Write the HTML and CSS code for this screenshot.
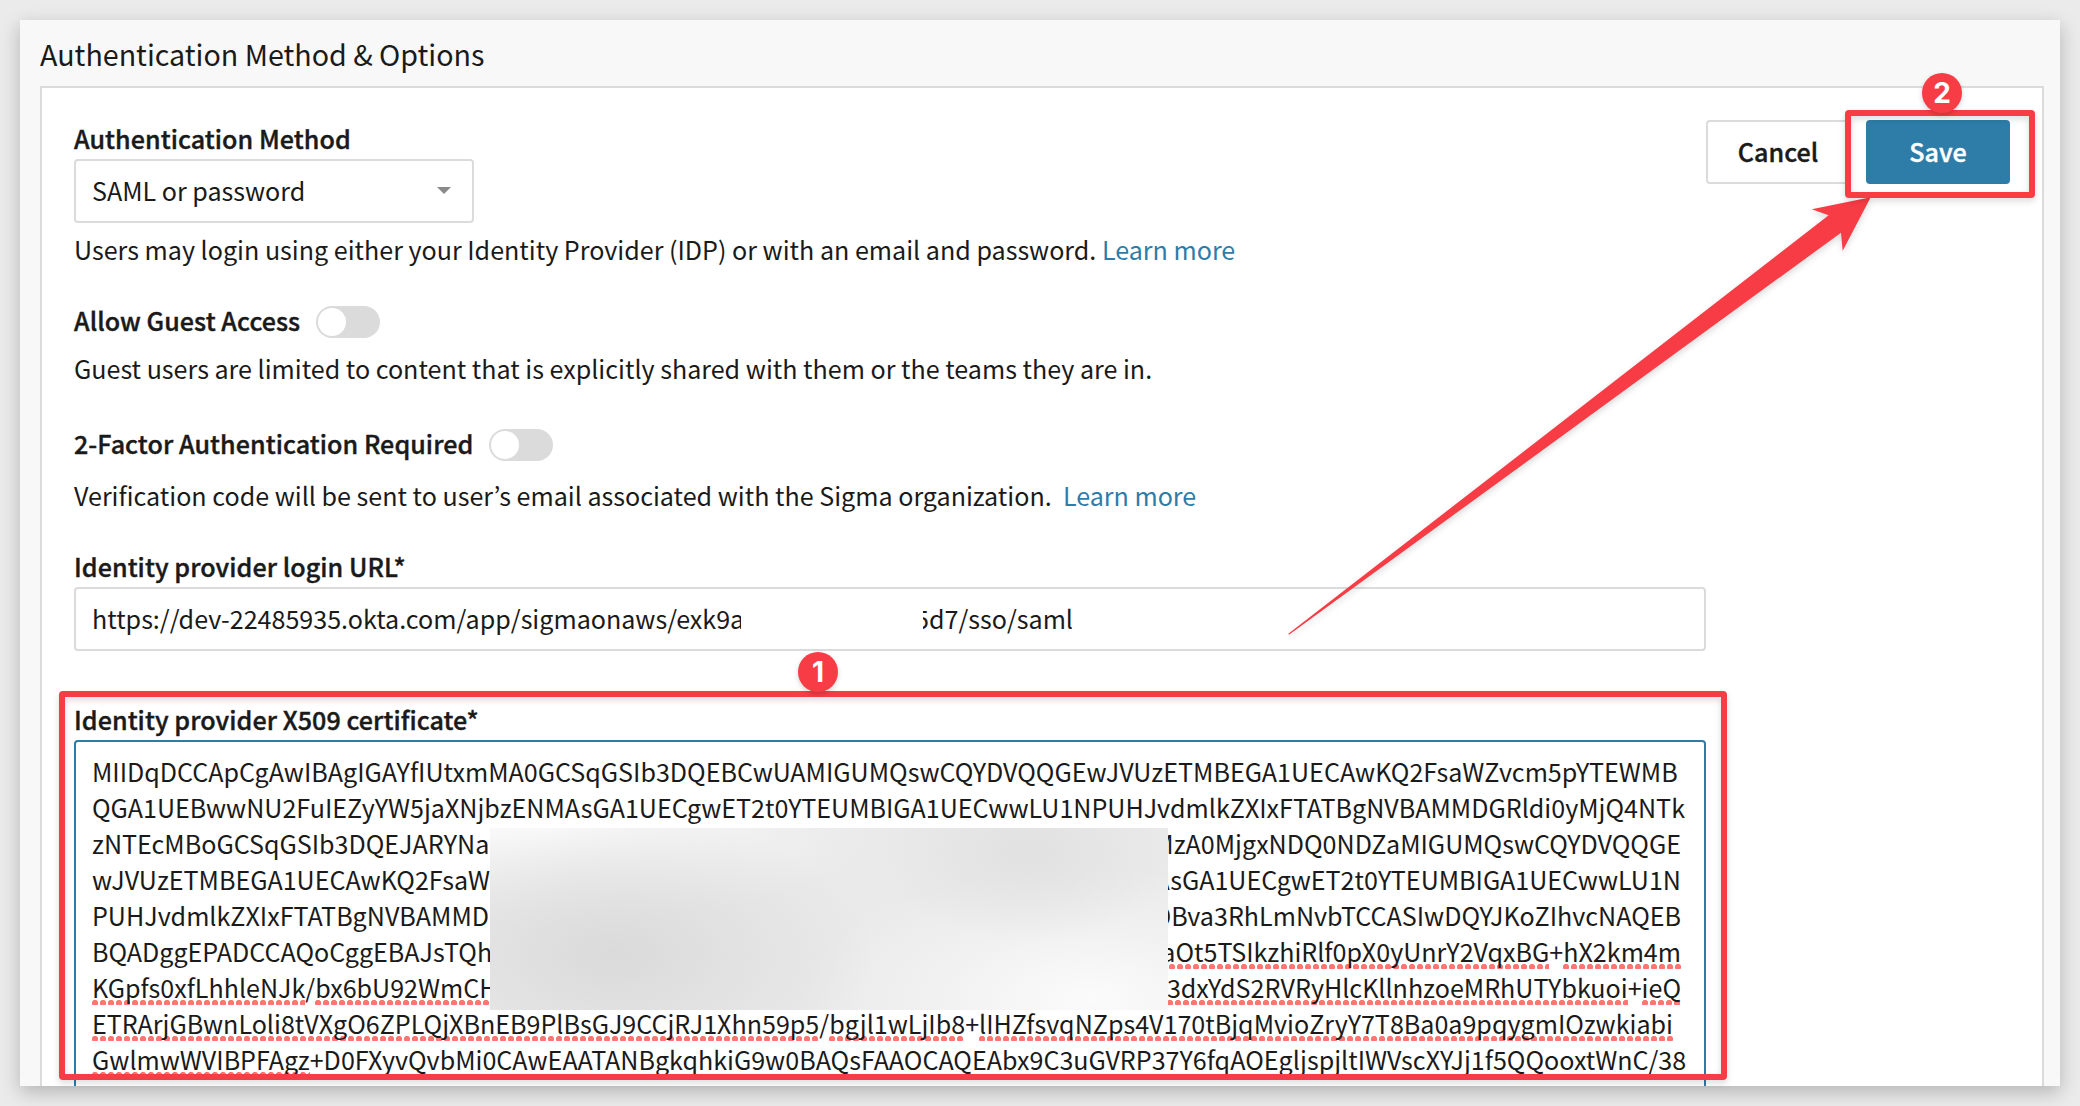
FILE: index.html
```html
<!DOCTYPE html>
<html lang="en">
<head>
<meta charset="utf-8">
<title>Authentication Method &amp; Options</title>
<link rel="stylesheet" href="styles.css">
</head>
<body>
<main class="panel">
  <h1 class="panel-title">Authentication Method &amp; Options</h1>
  <section class="card">
    <div class="form">
      <div class="label">Authentication Method</div>
      <div class="select">
        <span>SAML or password</span>
        <svg class="caret" width="14" height="7" viewBox="0 0 14 7"><path d="M0 0h14L7 7z" fill="#8a8a8a"/></svg>
      </div>
      <p class="hint hint-method">Users may login using either your Identity Provider (IDP) or with an email and password. <a class="link">Learn more</a></p>

      <div class="toggle-row">
        <span class="label">Allow Guest Access</span>
        <span class="toggle"><span class="knob"></span></span>
      </div>
      <p class="hint hint-guest">Guest users are limited to content that is explicitly shared with them or the teams they are in.</p>

      <div class="toggle-row toggle-row-2fa">
        <span class="label">2-Factor Authentication Required</span>
        <span class="toggle"><span class="knob"></span></span>
      </div>
      <p class="hint hint-2fa">Verification code will be sent to user’s email associated with the Sigma organization.&nbsp; <a class="link">Learn more</a></p>

      <div class="label label-url">Identity provider login URL*</div>
      <div class="input"><span class="url-head">https://dev-22485935.okta.com/app/sigmaonaws/exk9a</span><span class="url-tail">5d7/sso/saml</span></div>

      <div class="label label-cert">Identity provider X509 certificate*</div>
      <div class="textarea">
        <div class="line">MIIDqDCCApCgAwIBAgIGAYfIUtxmMA0GCSqGSIb3DQEBCwUAMIGUMQswCQYDVQQGEwJVUzETMBEGA1UECAwKQ2FsaWZvcm5pYTEWMB</div>
        <div class="line">QGA1UEBwwNU2FuIEZyYW5jaXNjbzENMAsGA1UECgwET2t0YTEUMBIGA1UECwwLU1NPUHJvdmlkZXIxFTATBgNVBAMMDGRldi0yMjQ4NTk</div>
        <div class="redacted">
          <div class="heads">
            <div class="line">zNTEcMBoGCSqGSIb3DQEJARYNa</div>
            <div class="line">wJVUzETMBEGA1UECAwKQ2FsaW</div>
            <div class="line">PUHJvdmlkZXIxFTATBgNVBAMMD</div>
            <div class="line">BQADggEPADCCAQoCggEBAJsTQh</div>
            <div class="line"><span class="sp">KGpfs0xfLhhleNJk</span>/<span class="sp">bx6bU92WmCH</span></div>
          </div>
          <div class="blur"></div>
          <div class="tails">
            <div class="line">MzA0MjgxNDQ0NDZaMIGUMQswCQYDVQQGE</div>
            <div class="line">AsGA1UECgwET2t0YTEUMBIGA1UECwwLU1N</div>
            <div class="line">DBva3RhLmNvbTCCASIwDQYJKoZIhvcNAQEB</div>
            <div class="line"><span class="sp">aOt5TSIkzhiRlf0pX0yUnrY2VqxBG</span>+<span class="sp">hX2km4m</span></div>
            <div class="line"><span class="sp">3dxYdS2RVRyHlcKllnhzoeMRhUTYbkuoi</span>+<span class="sp">ieQ</span></div>
          </div>
        </div>
        <div class="line"><span class="sp">ETRArjGBwnLoli8tVXgO6ZPLQjXBnEB9PlBsGJ9CCjRJ1Xhn59p5</span>/<span class="sp">bgjl1wLjIb8</span>+<span class="sp">lIHZfsvqNZps4V170tBjqMvioZryY7T8Ba0a9pqygmIOzwkiabi</span></div>
        <div class="line"><span class="sp">GwlmwWVIBPFAgz</span>+D0FXyvQvbMi0CAwEAATANBgkqhkiG9w0BAQsFAAOCAQEAbx9C3uGVRP37Y6fqAOEgljspjltIWVscXYJj1f5QQooxtWnC/38</div>
      </div>
    </div>
    <div class="actions">
      <div class="btn">Cancel</div>
      <div class="btn btn-primary">Save</div>
    </div>
  </section>
</main>

<svg class="arrow" width="2080" height="1106" viewBox="0 0 2080 1106">
  <path d="M1870.7 197.3L1811.7 209.3L1828.7 215.3L1288 634L1289.3 634.6L1841 232.7L1842.7 250.7Z" fill="#f73c46"/>
</svg>
<div class="frame frame-cert"></div>
<div class="frame frame-save"></div>
<div class="badge badge-1">1</div>
<div class="badge badge-2">2</div>
</body>
</html>
```
FILE: styles.css
```css
* { box-sizing: border-box; }

body {
  margin: 0;
  padding: 20px;
  height: 1106px;
  overflow: hidden;
  position: relative;
  background: #ebebeb;
  color: #1a1a1a;
  font-family: "Noto Sans CJK KR", "Source Sans Pro", sans-serif;
  font-size: 25.08px;
  line-height: 36px;
}

.panel {
  height: 1066px;
  padding: 14px 16px 0 20px;
  overflow: hidden;
  background: #f8f8f8;
  box-shadow: 0 6px 18px rgba(0, 0, 0, .24);
}

.panel-title {
  margin: 0 0 12px;
  font-size: 28.65px;
  font-weight: 400;
  line-height: 40px;
}

.card {
  display: flex;
  align-items: flex-start;
  height: 1100px;
  padding: 32px 32px 0;
  border: 2px solid #dbdbdb;
  background: #fff;
}

.form { width: 1632px; flex: none; }

.label {
  font-weight: 500;
  letter-spacing: .06px;
  -webkit-text-stroke: .4px #1a1a1a;
  white-space: nowrap;
}
.label-url { margin-top: 35px; }
.label-cert { margin-top: 50px; }

.select, .input {
  display: flex;
  align-items: center;
  height: 64px;
  margin-top: 3px;
  padding: 0 16px 2px;
  border: 2px solid #dbdbdb;
  border-radius: 4px;
  white-space: nowrap;
}
.select {
  justify-content: space-between;
  width: 400px;
  padding-right: 21px;
}

.hint { margin: 0; white-space: nowrap; }
.hint-method { margin-top: 8px; }
.hint-guest { margin-top: 12px; }
.hint-2fa { margin-top: 16px; }
.link { color: #2d7da8; }

.toggle-row {
  display: flex;
  align-items: flex-start;
  gap: 16px;
  height: 36px;
  margin-top: 35px;
}
.toggle-row-2fa { margin-top: 39px; }
.toggle {
  width: 64px;
  height: 32px;
  margin-top: 4px;
  padding: 2px;
  border-radius: 16px;
  background: #dbdbdb;
}
.knob {
  display: block;
  width: 28px;
  height: 28px;
  border-radius: 50%;
  background: #fff;
}

.url-head { width: 649px; overflow: hidden; }
.url-tail {
  display: flex;
  justify-content: flex-end;
  width: 150px;
  margin-left: 182px;
  overflow: hidden;
}

.textarea {
  height: 420px;
  margin-top: 3px;
  padding: 11px 16px;
  border: 2px solid #2d7ba8;
  border-radius: 4px;
}
.line { height: 36px; white-space: nowrap; }

.sp {
  background: radial-gradient(circle at 3px 3px, #ff7670 2.8px, transparent 3.4px) 0 31px / 8px 6px repeat-x;
}

.redacted { display: flex; }
.heads { width: 398px; overflow: hidden; }
.tails { width: 513px; overflow: hidden; }
.tails .line { display: flex; justify-content: flex-end; }
.blur {
  width: 678px;
  height: 182px;
  margin-top: 3px;
  margin-bottom: -5px;
  background:
    radial-gradient(ellipse 260px 140px at 125px 127px, #dadada, rgba(222, 222, 222, .7) 45%, rgba(232, 232, 232, 0)),
    radial-gradient(ellipse 150px 90px at 538px 24px, #e1e1e1, rgba(234, 234, 234, 0)),
    radial-gradient(ellipse 290px 130px at 600px 170px, #fbfbfb, rgba(245, 245, 245, .6) 55%, rgba(240, 240, 240, 0)),
    radial-gradient(ellipse 330px 100px at 50px 0, #fbfbfb, rgba(246, 246, 246, .7) 50%, rgba(240, 240, 240, 0)),
    #eaeaea;
}

.actions { display: flex; gap: 16px; flex: none; }
.btn {
  display: flex;
  align-items: center;
  justify-content: center;
  width: 144px;
  height: 64px;
  padding-bottom: 2px;
  border: 2px solid #dbdbdb;
  border-radius: 4px;
  font-weight: 500;
  letter-spacing: .06px;
  -webkit-text-stroke: .4px currentColor;
}
.btn-primary {
  border-color: #2d7da8;
  background: #2d7da8;
  color: #fff;
}

/* Callouts laid over the page */
.arrow {
  position: absolute;
  left: 0;
  top: 0;
  filter: drop-shadow(0 3px 3px rgba(0, 0, 0, .15));
}
.frame {
  position: absolute;
  border: 6px solid #f73c46;
  border-radius: 4px;
  filter: drop-shadow(0 3px 3px rgba(0, 0, 0, .15));
}
.frame-cert { left: 59px; top: 691px; width: 1668px; height: 389px; }
.frame-save { left: 1845px; top: 110px; width: 190px; height: 88px; }
.badge {
  position: absolute;
  width: 40px;
  height: 40px;
  border-radius: 50%;
  background: #f73c46;
  color: #fff;
  font: 700 28px/40px Inter, sans-serif;
  text-align: center;
  box-shadow: 0 2px 5px rgba(0, 0, 0, .18);
}
.badge-1 { left: 798px; top: 652px; }
.badge-2 { left: 1922px; top: 73px; }
```
